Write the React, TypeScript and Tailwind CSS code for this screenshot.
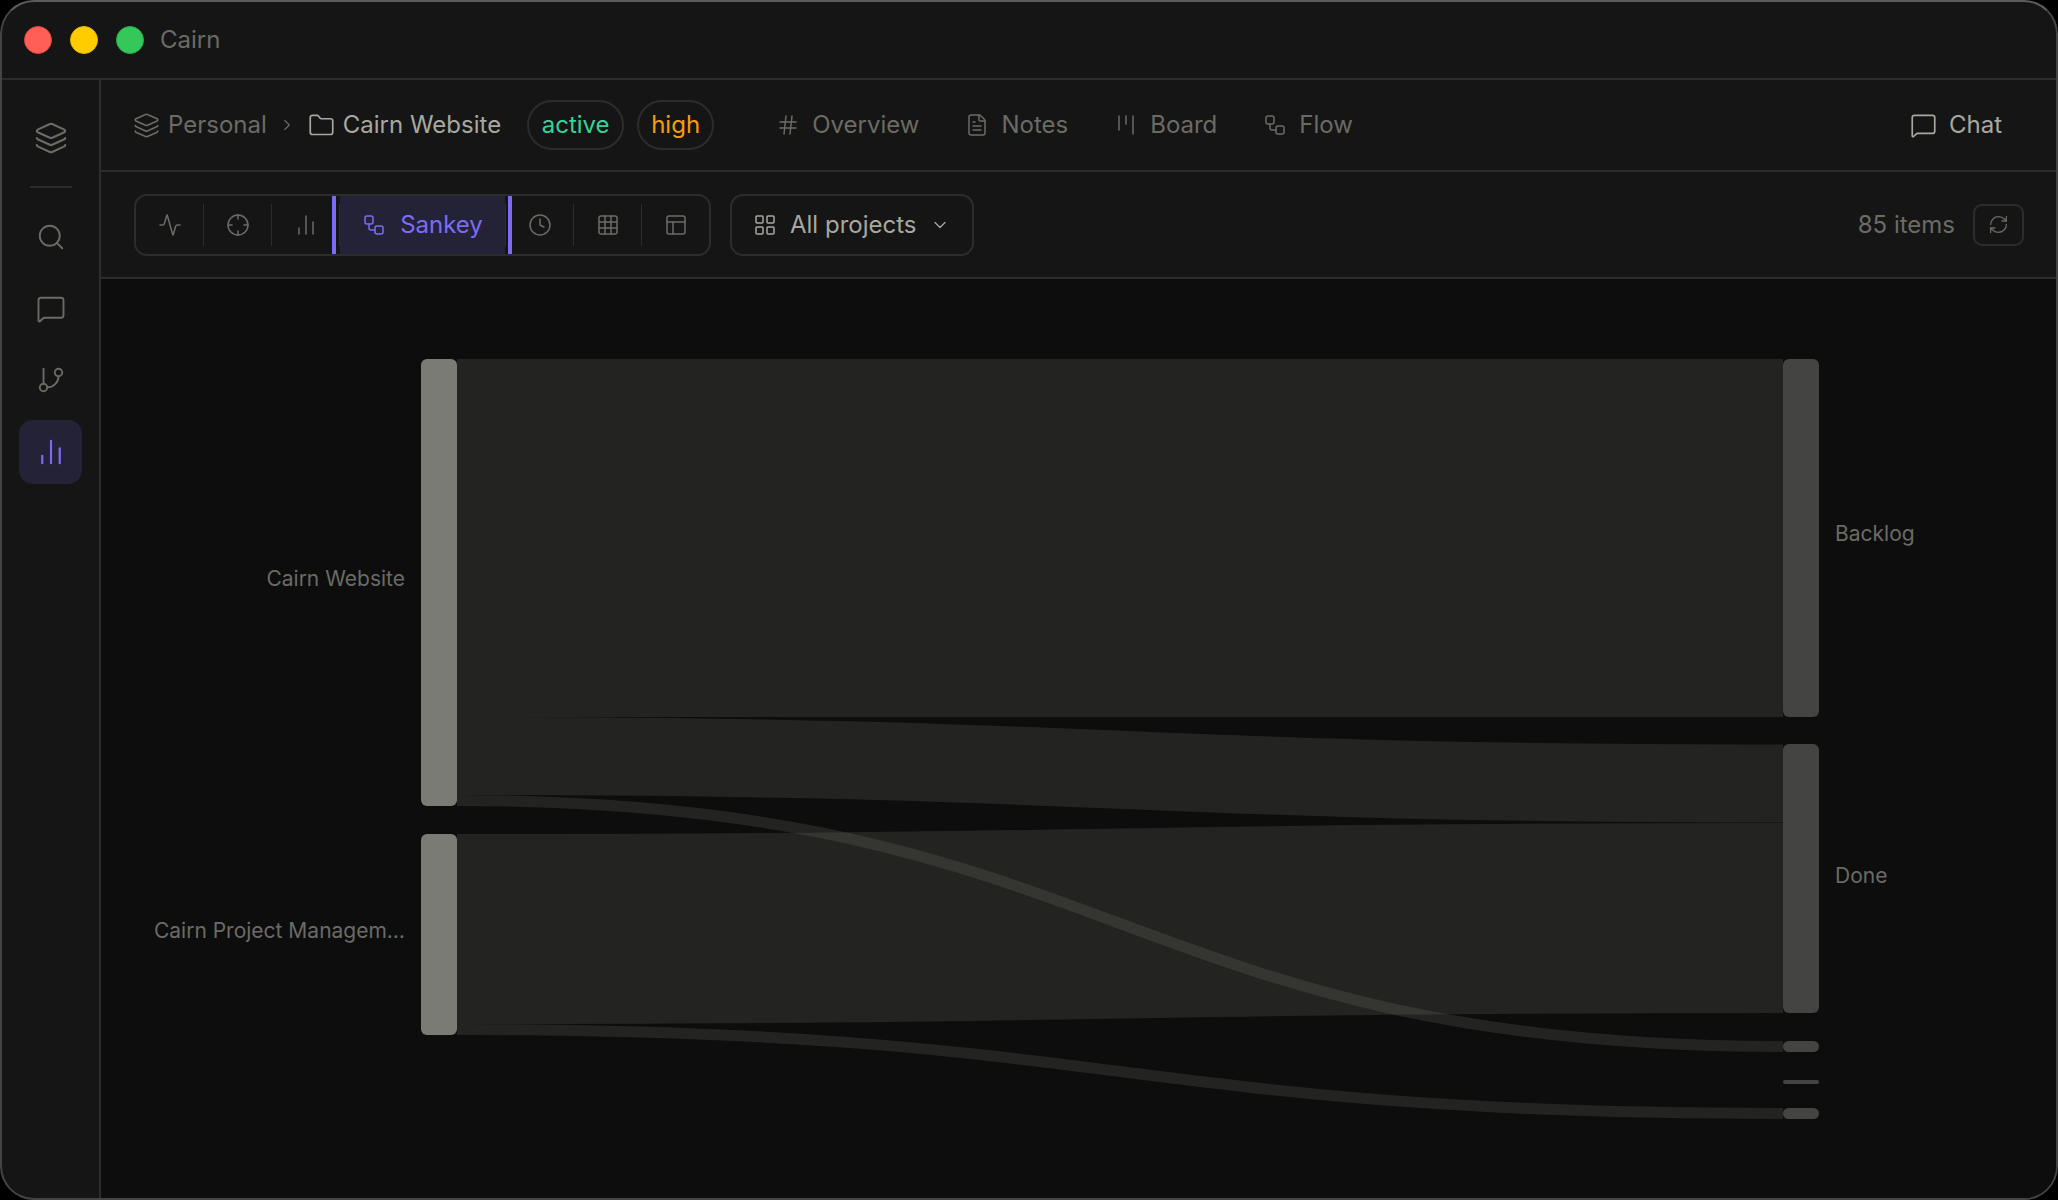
import {
  Activity,
  ChartNoAxesColumn,
  ChevronDown,
  ChevronRight,
  Clock,
  Crosshair,
  FileText,
  Folder,
  GitBranch,
  Grid3x3,
  Hash,
  Kanban,
  Layers,
  LayoutGrid,
  MessageSquare,
  PanelsTopLeft,
  RefreshCw,
  Search,
  Workflow,
} from 'lucide-react';

const links = [
  { y0: 538, y1: 538, w: 358 },
  { y0: 756, y1: 783.5, w: 78 },
  { y0: 800.5, y1: 1046.5, w: 11 },
  { y0: 929, y1: 918, w: 190 },
  { y0: 1029.5, y1: 1113.5, w: 11 },
];

const rightNodes = [
  { y: 359, h: 358 },
  { y: 744, h: 269 },
  { y: 1041, h: 11 },
  { y: 1080, h: 4 },
  { y: 1108, h: 11 },
];

function Sankey() {
  return (
    <svg viewBox="101 279 1955 919" className="w-[1955px] h-[919px] block">
      {links.map((l, i) => (
        <path
          key={i}
          d={`M457,${l.y0} C1120,${l.y0} 1120,${l.y1} 1783,${l.y1}`}
          fill="none"
          stroke="#7b7b75"
          strokeOpacity={0.2}
          strokeWidth={l.w}
        />
      ))}
      <rect x={421} y={359} width={36} height={447} rx={6} fill="#7b7b75" />
      <rect x={421} y={834} width={36} height={201} rx={6} fill="#7b7b75" />
      {rightNodes.map((n, i) => (
        <rect key={i} x={1783} y={n.y} width={36} height={n.h} rx={Math.min(6, n.h / 2)} fill="#444443" />
      ))}
      <g fill="#6b6b66" fontSize={21} fontFamily="Inter, sans-serif">
        <text x={405} y={580} textAnchor="end" dominantBaseline="middle">Cairn Website</text>
        <text x={405} y={932} textAnchor="end" dominantBaseline="middle">Cairn Project Managem…</text>
        <text x={1835} y={535} dominantBaseline="middle">Backlog</text>
        <text x={1835} y={877} dominantBaseline="middle">Done</text>
      </g>
    </svg>
  );
}

function SideIcon({ icon: Icon, size = 30 }: any) {
  return (
    <div className="w-[63px] h-[63px] flex items-center justify-center text-[#6b6b66]">
      <Icon size={size} strokeWidth={1.5} />
    </div>
  );
}

function NavItem({ icon: Icon, label, size = 24, className = '' }: any) {
  return (
    <div className={`flex items-center gap-[12px] text-[#6b6b66] ${className}`}>
      <Icon size={size} strokeWidth={1.5} />
      <span>{label}</span>
    </div>
  );
}

function ToolButton({ icon: Icon }: any) {
  return (
    <div className="w-[67px] h-full flex items-center justify-center text-[#6b6b66]">
      <Icon size={24} strokeWidth={1.5} />
    </div>
  );
}

function Sep() {
  return <div className="w-px h-[42px] bg-[#2c2c2c]" />;
}

export default function App() {
  return (
    <div className="w-[2058px] h-[1200px] bg-black overflow-hidden font-['Inter',sans-serif]">
      <div className="w-full h-full rounded-[34px] border-2 border-[#444444] border-t-[#5c5c5c] bg-[#151515] overflow-hidden flex flex-col">
        {/* Title bar */}
        <div className="h-[78px] shrink-0 border-b-2 border-[#2c2c2c] flex items-center pl-[22px] gap-[18px]">
          <div className="w-[28px] h-[28px] rounded-full bg-[#ff5f57] border border-[#e0443e]" />
          <div className="w-[28px] h-[28px] rounded-full bg-[#ffcc00] border border-[#e6b800]" />
          <div className="w-[28px] h-[28px] rounded-full bg-[#34c759] border border-[#2aad4c]" />
          <span className="text-[24px] text-[#6b6b66] ml-[-2px]">Cairn</span>
        </div>

        <div className="flex-1 flex min-h-0">
          {/* Sidebar */}
          <div className="w-[99px] shrink-0 border-r-2 border-[#2c2c2c] flex flex-col items-center pl-[-1px] pt-[26px]">
            <SideIcon icon={Layers} size={34} />
            <div className="w-[42px] h-[2px] bg-[#2c2c2c] mt-[17px] mb-[17px]" />
            <SideIcon icon={Search} />
            <div className="h-[9px]" />
            <SideIcon icon={MessageSquare} />
            <div className="h-[8px]" />
            <SideIcon icon={GitBranch} />
            <div className="h-[9px]" />
            <div className="w-[63px] h-[64px] rounded-[14px] bg-[#232236] flex items-center justify-center text-[#7c6cf5]">
              <ChartNoAxesColumn size={30} strokeWidth={1.75} />
            </div>
          </div>

          <div className="flex-1 min-w-0 flex flex-col">
            {/* Header */}
            <div className="h-[92px] shrink-0 border-b-2 border-[#2c2c2c] flex items-center pl-[32px] pr-[54px] text-[24px]">
              <Layers size={27} strokeWidth={1.5} className="text-[#6b6b66]" />
              <span className="ml-[8px] text-[#6b6b66]">Personal</span>
              <ChevronRight size={18} strokeWidth={1.5} className="ml-[11px] text-[#6b6b66]" />
              <Folder size={27} strokeWidth={1.5} className="ml-[12px] text-[#a8a8a0]" />
              <span className="ml-[8px] text-[#a8a8a0]">Cairn Website</span>
              <div className="ml-[26px] h-[50px] w-[97px] rounded-full border-2 border-[#2c2c2c] flex items-center justify-center text-[#34d399]">active</div>
              <div className="ml-[13px] h-[50px] w-[77px] rounded-full border-2 border-[#2c2c2c] flex items-center justify-center text-[#f59e0b]">high</div>
              <NavItem icon={Hash} label="Overview" className="ml-[62px]" />
              <NavItem icon={FileText} label="Notes" className="ml-[46px]" />
              <NavItem icon={Kanban} label="Board" className="ml-[46px]" />
              <NavItem icon={Workflow} label="Flow" className="ml-[46px]" />
              <div className="ml-auto flex items-center gap-[12px] text-[#a8a8a0]">
                <MessageSquare size={27} strokeWidth={1.5} />
                <span>Chat</span>
              </div>
            </div>

            {/* Toolbar */}
            <div className="h-[107px] shrink-0 border-b-2 border-[#2c2c2c] flex items-center pl-[33px] pr-[32px] text-[24px]">
              <div className="h-[62px] rounded-[13px] border-2 border-[#2c2c2c] flex items-center">
                <ToolButton icon={Activity} />
                <Sep />
                <ToolButton icon={Crosshair} />
                <Sep />
                <ToolButton icon={ChartNoAxesColumn} />
                <Sep />
                <div className="relative w-[165px] h-full bg-[#232236] flex items-center justify-center gap-[14px] text-[#7c6cf5]">
                  <div className="absolute left-[-8px] top-0 bottom-0 w-[4px] bg-[#7c6cf5]" />
                  <Workflow size={24} strokeWidth={1.5} />
                  <span>Sankey</span>
                  <div className="absolute right-[-7px] top-0 bottom-0 w-[4px] bg-[#7c6cf5]" />
                </div>
                <Sep />
                <ToolButton icon={Clock} />
                <Sep />
                <ToolButton icon={Grid3x3} />
                <Sep />
                <ToolButton icon={PanelsTopLeft} />
              </div>
              <div className="ml-[19px] w-[244px] h-[62px] rounded-[13px] border-2 border-[#2c2c2c] flex items-center pl-[21px] text-[#a8a8a0]">
                <LayoutGrid size={24} strokeWidth={1.5} />
                <span className="ml-[13px]">All projects</span>
                <ChevronDown size={20} strokeWidth={1.5} className="ml-[14px]" />
              </div>
              <span className="ml-auto text-[#6b6b66]">85 items</span>
              <div className="ml-[18px] w-[51px] h-[42px] rounded-[9px] border-2 border-[#2c2c2c] flex items-center justify-center text-[#6b6b66]">
                <RefreshCw size={21} strokeWidth={1.5} />
              </div>
            </div>

            {/* Chart */}
            <div className="flex-1 min-h-0 bg-[#0d0d0d]">
              <Sankey />
            </div>
          </div>
        </div>
      </div>
    </div>
  );
}
